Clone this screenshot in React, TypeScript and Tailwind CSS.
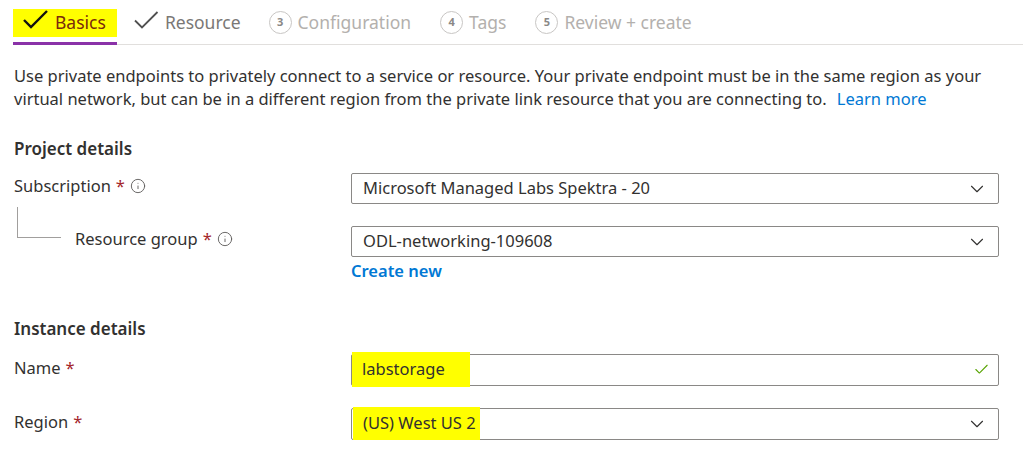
import { ChevronDown, Check, Info } from 'lucide-react';

const font = { fontFamily: '"Noto Sans", "Open Sans", sans-serif' };

function StepCircle({ n }: { n: number }) {
     return (
          <span className="flex h-[23px] w-[23px] items-center justify-center rounded-full border border-[#c8c6c4] text-[11px] font-bold text-[#8a8886]">
               {n}
          </span>
     );
}

function Tabs() {
     return (
          <div className="ml-[13px] flex h-[45px] items-end border-b border-[#e1dfdd]">
               {/* Basics - highlighted */}
               <div className="relative flex h-[45px] items-center pt-[4px]">
                    <div className="mb-[2px] flex h-[28px] items-center gap-[6px] bg-[#ffff00] pl-[10px] pr-[11px]">
                         <svg width="26" height="20" viewBox="0 0 26 20" className="-mt-[6px]">
                              <path d="M1 10 L8 17 L24 1" fill="none" stroke="#111" strokeWidth="2.4" />
                         </svg>
                         <span className="text-[17.5px] text-[#7a2a0c]">Basics</span>
                    </div>
                    <div className="absolute bottom-[-1px] left-0 h-[3px] w-[104px] bg-[#8a32a8]" />
               </div>
               <div className="ml-[17px] flex h-[45px] items-center gap-[6px] pt-[2px]">
                    <svg width="25" height="19" viewBox="0 0 25 19" className="-mt-[4px]">
                         <path d="M1 9.5 L8 16.5 L23.5 1" fill="none" stroke="#505050" strokeWidth="1.8" />
                    </svg>
                    <span className="text-[17.5px] text-[#7a7876]">Resource</span>
               </div>
               <div className="ml-[28px] flex h-[45px] items-center gap-[6px] pt-[2px]">
                    <StepCircle n={3} />
                    <span className="text-[17.5px] text-[#b3b0ad]">Configuration</span>
               </div>
               <div className="ml-[29px] flex h-[45px] items-center gap-[6px] pt-[2px]">
                    <StepCircle n={4} />
                    <span className="text-[17.5px] text-[#b3b0ad]">Tags</span>
               </div>
               <div className="ml-[29px] flex h-[45px] items-center gap-[6px] pt-[2px]">
                    <StepCircle n={5} />
                    <span className="text-[17.5px] text-[#b3b0ad]">Review + create</span>
               </div>
          </div>
     );
}

function Label({ text, info }: { text: string; info?: boolean }) {
     return (
          <span className="flex items-center gap-[5px] text-[16.5px] text-[#323130]">
               {text}
               <span className="text-[#a4262c]">*</span>
               {info && <Info size={16} strokeWidth={1.4} className="text-[#605e5c]" />}
          </span>
     );
}

function SelectBox({ value, highlight, h = 31 }: { value: string; highlight?: boolean; h?: number }) {
     return (
          <div
               className={`flex w-[648px] items-center justify-between rounded-[2px] border border-[#8a8886] pl-[11px] pr-[10px] ${h === 32 ? 'h-[32px]' : 'h-[31px]'}`}
          >
               <span
                    className={`text-[16.5px] text-[#323130] ${highlight ? '-ml-[10px] bg-[#ffff00] py-[4px] pl-[10px] pr-[4px]' : ''}`}
               >
                    {value}
               </span>
               <ChevronDown size={22} strokeWidth={1.2} className="text-[#323130]" />
          </div>
     );
}

export default function App() {
     return (
          <div className="h-[457px] w-[1023px] overflow-hidden bg-white" style={font}>
               <Tabs />

               <p className="ml-[14px] mt-[19px] text-[16.5px] leading-[23px] text-[#323130]">
                    Use private endpoints to privately connect to a service or resource. Your private endpoint must be in the same region as your
                    <br />
                    virtual network, but can be in a different region from the private link resource that you are connecting to.
                    <span className="ml-[10px] text-[#0078d4]">Learn more</span>
               </p>

               {/* Project details */}
               <h2 className="ml-[14px] mt-[27px] text-[17px] font-semibold leading-[24px] text-[#323130]">Project details</h2>

               <div className="mt-[12px] flex">
                    <div className="w-[351px] pl-[14px] pt-[1px]">
                         <Label text="Subscription" info />
                    </div>
                    <SelectBox value="Microsoft Managed Labs Spektra - 20" />
               </div>

               <div className="mt-[22px] flex">
                    <div className="relative w-[351px] pl-[75px] pt-[1px]">
                         <div className="absolute left-[17px] top-[-19px] h-[31px] w-[44px] border-b border-l border-[#a19f9d]" />
                         <Label text="Resource group" info />
                    </div>
                    <div className="flex flex-col">
                         <SelectBox value="ODL-networking-109608" />
                         <span className="mt-[2px] text-[16.5px] font-semibold text-[#0078d4]">Create new</span>
                    </div>
               </div>

               {/* Instance details */}
               <h2 className="ml-[14px] mt-[33px] text-[17px] font-semibold leading-[24px] text-[#323130]">Instance details</h2>

               <div className="mt-[13px] flex">
                    <div className="w-[351px] pl-[14px] pt-[2px]">
                         <Label text="Name" />
                    </div>
                    <div className="flex h-[32px] w-[648px] items-center justify-between rounded-[2px] border border-[#8a8886] pr-[8px]">
                         <span className="bg-[#ffff00] py-[5px] pl-[10px] pr-[25px] text-[16.5px] text-[#323130]">labstorage</span>
                         <Check size={17} strokeWidth={1.5} className="text-[#57a300]" />
                    </div>
               </div>

               <div className="mt-[22px] flex">
                    <div className="w-[351px] pl-[14px] pt-[2px]">
                         <Label text="Region" />
                    </div>
                    <SelectBox value="(US) West US 2" highlight h={32} />
               </div>
          </div>
     );
}
